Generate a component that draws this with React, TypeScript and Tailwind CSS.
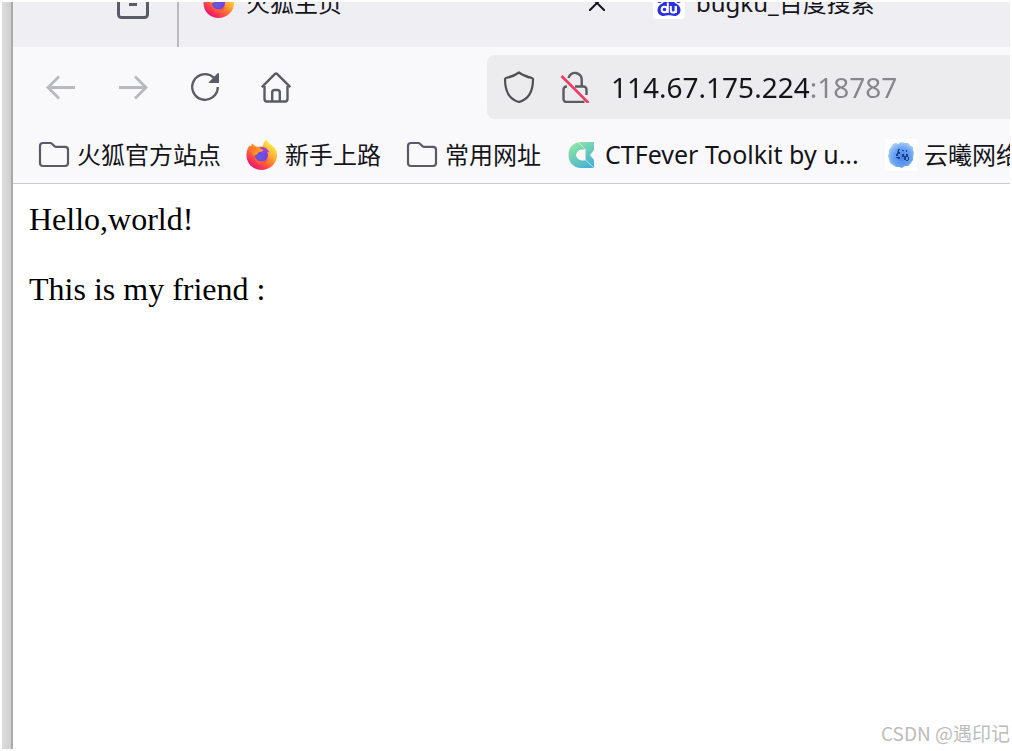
import { useId, useState, type ReactNode } from "react";

const NAV_BUTTON = "flex h-16 w-18 items-center justify-center";
const UI_FONT = "font-['Noto_Sans','Noto_Sans_CJK_SC',sans-serif]";

function FirefoxIcon() {
  const id = useId();
  return (
    <svg viewBox="0 0 32 32" className="size-8 shrink-0" aria-hidden="true">
      <defs>
        <linearGradient id={`${id}-body`} x1="0.85" y1="0.1" x2="0.2" y2="0.95">
          <stop offset="0" stopColor="#fff44f" />
          <stop offset="0.3" stopColor="#ffb931" />
          <stop offset="0.55" stopColor="#ff7a33" />
          <stop offset="0.8" stopColor="#ff3750" />
          <stop offset="1" stopColor="#e0107f" />
        </linearGradient>
        <radialGradient id={`${id}-globe`} cx="0.4" cy="0.65" r="0.7">
          <stop offset="0" stopColor="#5a62dc" />
          <stop offset="0.6" stopColor="#7542dc" />
          <stop offset="1" stopColor="#a436dc" />
        </radialGradient>
        <linearGradient id={`${id}-head`} x1="0" y1="0" x2="1" y2="0.6">
          <stop offset="0" stopColor="#ff6a2a" />
          <stop offset="1" stopColor="#ffad25" />
        </linearGradient>
      </defs>
      <path
        fill={`url(#${id}-body)`}
        d="M20.500.5c-2 2-3.500 4-3.700 6.800l-6 .4L6 4.500c-.7 1-.9 2-.8 3L3.500 6.500C1.500 9 .5 12 .5 16c0 8.500 6.500 15 15 15s15.500-6.500 15.500-15c0-4-1.500-6.500-3.500-8.300-3-2.400-5.500-4-7-7.200z"
      />
      <circle cx="15.500" cy="16" r="6.600" fill={`url(#${id}-globe)`} />
      <path fill="#9a3fe0" d="M13 8.500c3-1.200 7-.7 8.800 2.500l1.700 2.500-3.500-1-3 2z" />
      <path
        fill={`url(#${id}-head)`}
        d="M5.500 7c1.600 1 3 1.500 5 1.500 1.600 0 3 .7 4.500 1.200 2 .7 2.200 1 2 1.700-.3 1-2 1.200-3.500 1.600-1 .3-1.200 1-2.400 2.200-1.500 1.500-3 1.300-3 1.300-2 0-3.500-5-2.600-9.500z"
      />
      <path
        fill="#ff5a3a"
        d="M8.500 14c-.8 4 2.200 8 6.500 8.500 3 .4 5.800-1 7-3.400-.5 4-3.600 6.200-7.500 6-5-.3-7.500-6-6-11.100z"
      />
    </svg>
  );
}

function BaiduIcon() {
  return (
    <svg viewBox="0 0 32 32" className="size-8 shrink-0" aria-hidden="true">
      <rect width="32" height="32" rx="4" fill="#fff" />
      <g fill="#2a32e0">
        <ellipse cx="6.500" cy="12" rx="3" ry="4" />
        <ellipse cx="12" cy="6" rx="3" ry="4" />
        <ellipse cx="20" cy="6" rx="3" ry="4" />
        <ellipse cx="25.500" cy="12" rx="3" ry="4" />
        <path d="M16 11.500c-3 0-4 2.500-6.500 4.800C6.500 18 4.500 19.500 4.500 23c0 3.500 2.500 6 6 6 2 0 3.500-.7 5.500-.7s3.500.7 5.500.7c3.500 0 6-2.500 6-6 0-3.500-2-5-5-6.700-2.500-2.300-3.500-4.800-6.500-4.800z" />
      </g>
      <g fill="none" stroke="#fff" strokeWidth="2">
        <circle cx="11.500" cy="22.500" r="2.800" />
        <path d="M14.800 15.500v10.500M17.800 19v4.200a2.400 2.400 0 0 0 4.800 0V19M23 19v7" />
      </g>
    </svg>
  );
}

function FolderIcon() {
  return (
    <svg viewBox="0 0 32 32" className="size-8 shrink-0" aria-hidden="true">
      <path
        fill="none"
        stroke="#5b5b66"
        strokeWidth="2.200"
        d="M5 4h7.200c.8 0 1.500.3 2 .9L16 6.800c.5.600 1.200 1 2 1h9a3 3 0 0 1 3 3V24a3 3 0 0 1-3 3H5a3 3 0 0 1-3-3V7a3 3 0 0 1 3-3z"
      />
    </svg>
  );
}

function CtfeverIcon() {
  return (
    <svg viewBox="0 0 32 32" className="size-8 shrink-0" aria-hidden="true">
      <defs>
        <linearGradient id="ctfever" x1="0.2" y1="0" x2="0.8" y2="1">
          <stop offset="0" stopColor="#91e8a5" />
          <stop offset="0.5" stopColor="#6bcbb8" />
          <stop offset="1" stopColor="#48afd8" />
        </linearGradient>
      </defs>
      <path
        fill="url(#ctfever)"
        d="M15 3h13v8l-4 5 4 5v8H15C7.500 29 2.500 23.500 2.500 16S7.500 3 15 3zm4.500 7.500h-3A6 6 0 0 0 10 16a6 6 0 0 0 6.500 5.500h3z"
      />
      <path d="M12 3l8 8M19.500 21l8.500 8" stroke="#d5f3e5" strokeWidth="0.8" />
    </svg>
  );
}

function YunxiIcon() {
  return (
    <svg viewBox="0 0 32 32" className="size-8 shrink-0" aria-hidden="true">
      <defs>
        <radialGradient id="yunxi" cx="0.55" cy="0.6" r="0.6">
          <stop offset="0" stopColor="#4584e6" />
          <stop offset="0.6" stopColor="#6ba3f2" />
          <stop offset="1" stopColor="#a9cdf8" />
        </radialGradient>
      </defs>
      <rect width="32" height="32" fill="#fff" />
      <path
        fill="url(#yunxi)"
        d="M8 5l3-1 2 1 3-2 4 1 3 0 3 3 2 1 0 3 1 3-1 4 0 3-2 3-3 3-3 0-3 2-3-1-3 0-3-2-3-2-1-4-1-3 1-3 0-3 2-3z"
      />
      <path
        fill="#163f8c"
        d="M13 10h2v1h-1v2h1v2h-2v2h-2v-2h1zM11 18h2v1h-2zM17 11h2v1h-2zM21 11h1v2h-1zM17 15h2v2h2v-1h2v2h-2v3h2v1h-2v-1h-2v-3h-2zM13 18h2v2h-2zM21 15h2v1h-2zM23 18h1v3h-1z"
      />
    </svg>
  );
}

function Tab({ icon, title, children }: { icon: ReactNode; title: string; children?: ReactNode }) {
  return (
    <div className="flex h-22 w-[450px] shrink-0 items-center gap-[11px] pl-6">
      {icon}
      <span className="flex-1 whitespace-nowrap">{title}</span>
      {children}
    </div>
  );
}

function TabStrip() {
  return (
    <div className="flex h-[45px] items-end overflow-hidden bg-[#efeef3]">
      <button
        aria-label="Firefox View"
        className="flex h-22 w-[166px] shrink-0 items-center justify-end border-r-2 border-[#b9b9be] pr-7"
      >
        <svg viewBox="0 0 32 32" className="size-8">
          <rect x="1.500" y="1.500" width="29" height="29" rx="3" fill="none" stroke="#5b5b66" strokeWidth="3" />
          <path d="M12 17.500h8" stroke="#5b5b66" strokeWidth="3" />
        </svg>
      </button>
      <Tab icon={<FirefoxIcon />} title="火狐主页">
        <button aria-label="Close tab" className="mr-4 flex size-8 items-center justify-center">
          <svg viewBox="0 0 16 16" className="size-4">
            <path d="M0 0l16 16M16 0L0 16" stroke="#15141a" strokeWidth="2" />
          </svg>
        </button>
      </Tab>
      <Tab icon={<BaiduIcon />} title="bugku_百度搜索" />
    </div>
  );
}

function Toolbar() {
  const [address, setAddress] = useState("114.67.175.224:18787");

  return (
    <div className="flex h-20 items-center pl-3">
      <button aria-label="Back" disabled className={NAV_BUTTON}>
        <svg viewBox="0 0 32 32" className="size-8" fill="none" stroke="#b8b8bf" strokeWidth="2.800">
          <path d="M30 16.500H3.500M14 5.500l-11 11 11 11" />
        </svg>
      </button>
      <button aria-label="Forward" disabled className={NAV_BUTTON}>
        <svg viewBox="0 0 32 32" className="size-8" fill="none" stroke="#b8b8bf" strokeWidth="2.800">
          <path d="M2 16.500h26.500M18 5.500l11 11-11 11" />
        </svg>
      </button>
      <button aria-label="Reload" className={NAV_BUTTON}>
        <svg viewBox="0 0 32 32" className="size-8">
          <path
            d="M28.800 16a12.800 12.800 0 1 1-4-9.300"
            fill="none"
            stroke="#5b5b66"
            strokeWidth="2.400"
          />
          <path d="M30 2.500V12h-9.500c-.6 0-.8-.7-.4-1.100l8.700-8.800z" fill="#5b5b66" />
        </svg>
      </button>
      <button aria-label="Home" className={NAV_BUTTON}>
        <svg
          viewBox="0 0 32 32"
          className="size-8"
          fill="none"
          stroke="#5b5b66"
          strokeWidth="2.400"
          strokeLinejoin="round"
        >
          <path d="M.8 16.200L13.800 3.200a1.800 1.800 0 0 1 2.500 0L29.300 16.200" />
          <path d="M3.500 15v13a2.500 2.500 0 0 0 2.500 2.500h18a2.500 2.500 0 0 0 2.500-2.500V15" />
          <path d="M11.200 30.500V21.500a2.500 2.500 0 0 1 2.500-2.500h2.600a2.500 2.500 0 0 1 2.500 2.500v9" />
        </svg>
      </button>

      <div className="ml-[174px] flex h-16 min-w-0 flex-1 items-center gap-6 rounded-l-lg bg-[#ececee] pl-4">
        <svg viewBox="0 0 32 32" className="size-8 shrink-0" fill="none" stroke="#4f4f56" strokeWidth="2.200">
          <path
            strokeLinejoin="round"
            d="M16 1.500c4 3 8.500 4.500 13 5.500.6.200 1 .7 1 1.300C30 18 27 28 16 31 5 28 2 18 2 8.300c0-.6.4-1.100 1-1.300 4.500-1 9-2.500 13-5.500z"
          />
        </svg>
        <svg viewBox="0 0 32 32" className="size-8 shrink-0" fill="none">
          <path
            d="M9.500 7a6.700 6.700 0 0 1 13.200 2v6.500M8 15.500H7.500a3 3 0 0 0-3 3V28a3 3 0 0 0 3 3h18M16 15.500h8.500a3 3 0 0 1 3 3V24"
            stroke="#5b5b60"
            strokeWidth="2.400"
          />
          <path d="M2.500 5l27 27" stroke="#ee3a64" strokeWidth="2.600" />
        </svg>
        {/* host in dark text, port in grey */}
        <input
          aria-label="Address"
          value={address}
          onChange={(e) => setAddress(e.target.value)}
          className="-ml-1 h-16 min-w-0 flex-1 bg-[linear-gradient(to_right,#15141a_198px,#85858a_198px)] bg-clip-text text-[28px] text-transparent caret-black outline-none"
        />
      </div>
    </div>
  );
}

const bookmarks = [
  { name: "火狐官方站点", icon: <FolderIcon /> },
  { name: "新手上路", icon: <FirefoxIcon /> },
  { name: "常用网址", icon: <FolderIcon /> },
  { name: "CTFever Toolkit by u...", icon: <CtfeverIcon />, className: "w-[255px] text-[25px]" },
  { name: "云曦网络", icon: <YunxiIcon /> },
];

function BookmarksBar() {
  return (
    <nav className="flex h-[57px] items-center gap-[25px] overflow-hidden border-b border-[#cccccf] pl-[25px]">
      {bookmarks.map((item) => (
        <a key={item.name} href="#" className="flex shrink-0 items-center gap-[7px] whitespace-nowrap">
          {item.icon}
          <span className={item.className}>{item.name}</span>
        </a>
      ))}
    </nav>
  );
}

export default function App() {
  return (
    <div className="flex h-screen bg-white p-0.5">
      <div className="w-[11px] shrink-0 border-r-2 border-[#aaaaaa] bg-linear-to-r from-[#dcdcdc] to-[#cfcfcf]" />
      <div className="relative flex min-w-0 flex-1 flex-col">
        <header className={`${UI_FONT} bg-[#f9f9fb] text-2xl text-[#15141a]`}>
          <TabStrip />
          <Toolbar />
          <BookmarksBar />
        </header>
        <main className="flex flex-1 flex-col gap-[34px] px-4 pt-[17px] font-['Liberation_Serif',serif] text-[32px] leading-9 text-black">
          <p>Hello,world!</p>
          <p>This is my friend :</p>
        </main>
        <p className="absolute right-0 bottom-0.5 font-['Noto_Sans_CJK_SC',sans-serif] text-[19px] leading-7 text-[#bcbcbc]">
          CSDN @遇印记
        </p>
      </div>
    </div>
  );
}
